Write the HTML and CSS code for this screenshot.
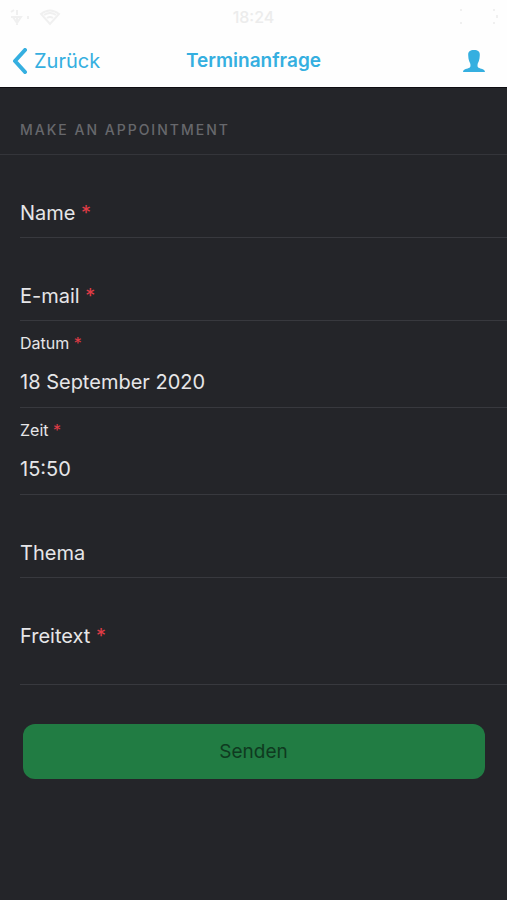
FILE: index.html
```html
<!DOCTYPE html>
<html lang="de">
<head>
    <meta charset="UTF-8">
    <meta name="viewport" content="width=device-width, initial-scale=1.0">
    <title>Terminanfrage</title>
    <link rel="stylesheet" href="styles.css">
</head>
<body>
    <header class="top">
        <div class="status-bar">
            <svg class="status-left" viewBox="0 0 54 18" width="54" height="18" aria-hidden="true">
                <path d="M3 4l3-2M3 9h4M9 2v5M5 9l4 6 4-6zM9 9v8M20 8v3" />
                <path d="M33 6q9-7 18 0l-9 10zM36 7q6-4 12 0M39 10q3-2 6 0" />
            </svg>
            <span class="clock">18:24</span>
            <svg class="status-right" viewBox="0 0 40 18" width="40" height="18" aria-hidden="true">
                <path d="M1 2h2M1 15h2M34 2h2M34 15h2M38 7v3" />
            </svg>
        </div>
        <nav class="nav-bar">
            <a href="#" class="back">
                <svg viewBox="0 0 16 26" width="16" height="26" aria-hidden="true">
                    <path d="M13 2L3 13l10 11" />
                </svg>
                Zurück
            </a>
            <h1>Terminanfrage</h1>
            <a href="#" class="profile" aria-label="Profil">
                <svg viewBox="0 0 22 22" width="22" height="22" aria-hidden="true">
                    <path d="M11 0C7 0 5 1.600 5.200 5c.1 2.500.4 4.500 1 6.200.3 1 .9 1.600 1.100 2.600.3 1.600.3 3.400-.8 4C4.500 18.900.5 18.500 0 22h22c-.5-3.500-4.500-3.100-6.500-4.200-1.100-.6-1.100-2.400-.8-4 .2-1 .8-1.600 1.100-2.600.6-1.700.9-3.700 1-6.200C17 1.600 15 0 11 0z" />
                </svg>
            </a>
        </nav>
    </header>

    <main>
        <h2 class="section-title">MAKE AN APPOINTMENT</h2>

        <form class="appointment-form">
            <div class="field">
                <label for="name">Name <span class="required">*</span></label>
                <input type="text" id="name" required>
            </div>
            <div class="field">
                <label for="email">E-mail <span class="required">*</span></label>
                <input type="email" id="email" required>
            </div>
            <div class="field filled">
                <label for="date">Datum <span class="required">*</span></label>
                <input type="text" id="date" value="18 September 2020" required>
            </div>
            <div class="field filled">
                <label for="time">Zeit <span class="required">*</span></label>
                <input type="text" id="time" value="15:50" required>
            </div>
            <div class="field">
                <label for="subject">Thema</label>
                <input type="text" id="subject">
            </div>
            <div class="field">
                <label for="message">Freitext <span class="required">*</span></label>
                <textarea id="message" required></textarea>
            </div>

            <button type="submit" class="btn">Senden</button>
        </form>
    </main>
</body>
</html>
```
FILE: styles.css
```css
* {
    box-sizing: border-box;
}

body {
    margin: 0;
    min-height: 100vh;
    background: #242529;
    color: #e6e6e8;
    font-family: Inter, 'Liberation Sans', sans-serif;
    font-size: 20px;
    line-height: 24px;
}

/* Header */
.top {
    background: #fefefe;
    color: #35afe0;
    border-bottom: 1px solid #0e0d12;
}

.status-bar {
    display: grid;
    grid-template-columns: 1fr auto 1fr;
    align-items: center;
    height: 34px;
    padding: 0 8px;
    color: #ececec;
}

.status-bar svg {
    fill: none;
    stroke: #f0f0f0;
    stroke-width: 2;
}

.status-right {
    justify-self: end;
}

.clock {
    font-size: 16px;
    font-weight: 500;
}

.nav-bar {
    display: grid;
    grid-template-columns: 1fr auto 1fr;
    align-items: center;
    height: 53px;
}

.back {
    display: flex;
    align-items: center;
    gap: 6px;
    padding-left: 12px;
    color: inherit;
    text-decoration: none;
}

.back svg {
    fill: none;
    stroke: currentColor;
    stroke-width: 4;
    stroke-linecap: round;
    stroke-linejoin: round;
}

h1 {
    margin: 0;
    font-size: 19px;
    font-weight: 600;
}

.profile {
    display: flex;
    justify-self: end;
    padding-right: 22px;
    color: inherit;
}

.profile svg {
    fill: currentColor;
}

/* Form */
.section-title {
    margin: 0;
    padding: 30px 20px 12px;
    border-bottom: 1px solid #34353a;
    color: #67686c;
    font-size: 14px;
    font-weight: 500;
    letter-spacing: 2px;
}

.field {
    display: grid;
    margin-left: 20px;
    border-bottom: 1px solid #38393e;
}

/* empty fields: the label rests on the input */
.field label,
.field input,
.field textarea {
    grid-area: 1 / 1;
}

.field label {
    padding-top: 46px;
    pointer-events: none;
}

.field input,
.field textarea {
    width: 100%;
    height: 82px;
    padding: 34px 0 0;
    border: none;
    outline: none;
    background: none;
    color: inherit;
    font: inherit;
    resize: none;
}

.field textarea {
    display: block;
    height: 106px;
    padding-top: 46px;
}

.required {
    color: #e03c46;
}

.filled label {
    padding-top: 10px;
    font-size: 16px;
}

.filled input {
    height: 86px;
    padding-top: 36px;
}

.btn {
    display: block;
    width: calc(100% - 45px);
    height: 55px;
    margin: 39px auto 40px;
    border: none;
    border-radius: 12px;
    background: #217c43;
    color: #0f3a20;
    font: inherit;
    font-size: 19px;
    cursor: pointer;
}
```
